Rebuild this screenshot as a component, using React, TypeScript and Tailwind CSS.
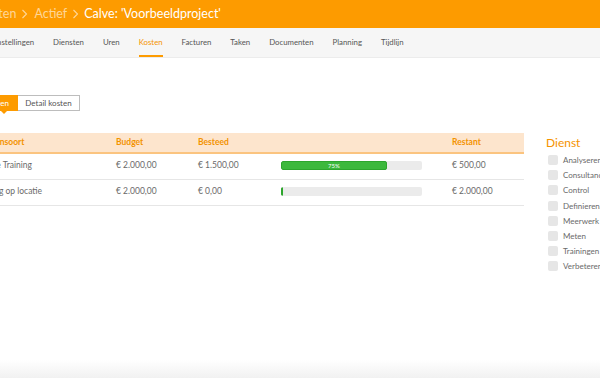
import React from "react";

const tabs = ["Instellingen", "Diensten", "Uren", "Kosten", "Facturen", "Taken", "Documenten", "Planning", "Tijdlijn"];

const rows = [
  { name: "Online Training", budget: "€ 2.000,00", spent: "€ 1.500,00", pct: 75, rest: "€ 500,00" },
  { name: "Training op locatie", budget: "€ 2.000,00", spent: "€ 0,00", pct: 0, rest: "€ 2.000,00" },
];

const diensten = ["Analyseren", "Consultancy", "Control", "Definieren/Analyseren", "Meerwerk", "Meten", "Trainingen", "Verbeteren"];

const Chevron = () => (
  <svg width="7" height="10" viewBox="0 0 7 10" className="mx-[5px]">
    <path d="M1.5 1l4 4-4 4" fill="none" stroke="rgba(255,255,255,0.6)" strokeWidth="1.1" />
  </svg>
);

export default function App() {
  return (
    <div className="relative w-[600px] h-[378px] overflow-hidden bg-white font-['Lato','Liberation_Sans',sans-serif]">
      {/* breadcrumb */}
      <div className="h-[28px] bg-[#fd9b00] flex items-center text-[12.5px] whitespace-nowrap">
        <span className="-ml-[36px] text-white/60">Projecten</span>
        <Chevron />
        <span className="text-white/60 ml-[1px]">Actief</span>
        <Chevron />
        <span className="text-white">Calve: 'Voorbeeldproject'</span>
      </div>

      {/* tabs */}
      <div className="h-[30px] bg-[#f6f6f6] border-b border-[#ececec] flex items-stretch gap-[19px] text-[7.8px] text-[#555] whitespace-nowrap">
        {tabs.map((t, i) => (
          <div
            key={t}
            className={
              "flex items-center pt-[2px] border-b-[2px] " +
              (t === "Kosten" ? "border-[#fd9b00] text-[#f59300]" : "border-transparent") +
              (i === 0 ? " -ml-[5px]" : "")
            }
          >
            {t}
          </div>
        ))}
      </div>

      {/* toggle buttons */}
      <div className="mt-[37px] flex text-[8px] whitespace-nowrap">
        <div className="relative h-[16px] w-[18px] bg-[#fd9b00] text-white flex items-center justify-end overflow-visible">
          <span className="pr-[9px]">Kosten</span>
          <span className="absolute left-[0px] top-[15px] w-0 h-0 border-l-[4px] border-r-[4px] border-t-[4px] border-l-transparent border-r-transparent border-t-[#fd9b00]" />
        </div>
        <div className="h-[16px] w-[62px] border border-[#bdbdbd] border-l-0 text-[#555] flex items-center justify-center">
          Detail kosten
        </div>
      </div>

      <div className="mt-[22px] flex">
        {/* table */}
        <div className="w-[524px] text-[8.5px] whitespace-nowrap">
          <div className="h-[21px] bg-[#fde5cd] border-b-[2px] border-[#fbc47f] grid grid-cols-[116px_82px_83px_171px_72px] items-center text-[#f39200] font-bold text-[8.5px]">
            <span className="-ml-[22px]">Kostensoort</span>
            <span>Budget</span>
            <span>Besteed</span>
            <span />
            <span>Restant</span>
          </div>
          {rows.map((r, i) => (
            <div
              key={i}
              className="h-[26px] border-b border-[#e6e6e6] grid grid-cols-[116px_82px_83px_171px_72px] items-start pt-[5px] text-[#6a6a6a]"
            >
              <span className={i === 0 ? "-ml-[24px]" : "-ml-[26px]"}>{r.name}</span>
              <span>{r.budget}</span>
              <span>{r.spent}</span>
              <div className="mt-[2px] h-[9px] w-[141px] bg-[#ebebeb] rounded-[2px] overflow-hidden">
                <div
                  className="h-full bg-[#3cb83c] border border-[#2da52d] rounded-[2px] text-white text-[6px] flex items-center justify-center"
                  style={{ width: r.pct === 0 ? 2 : `${r.pct}%` }}
                >
                  {r.pct > 0 ? `${r.pct}%` : ""}
                </div>
              </div>
              <span>{r.rest}</span>
            </div>
          ))}
        </div>

        {/* sidebar */}
        <div className="ml-[22px] mt-[3px] whitespace-nowrap">
          <div className="text-[12px] text-[#f59300] leading-[14px]">Dienst</div>
          <div className="mt-[5px] flex flex-col gap-[5.2px]">
            {diensten.map((d) => (
              <div key={d} className="flex items-center h-[10px] ml-[2px]">
                <span className="w-[10px] h-[10px] rounded-[2px] bg-[#e6e6e6]" />
                <span className="ml-[5px] text-[8px] text-[#6a6a6a]">{d}</span>
              </div>
            ))}
          </div>
        </div>
      </div>

      <div className="absolute left-0 right-0 bottom-0 h-[18px] bg-gradient-to-b from-white to-[#f1f1f1]" />
    </div>
  );
}
